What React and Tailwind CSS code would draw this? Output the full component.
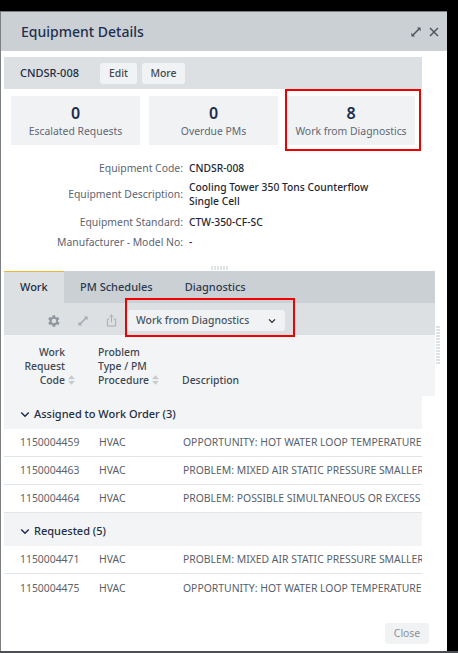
import React from "react";

const font = { fontFamily: '"Noto Sans", sans-serif' };

function Expand({ className }) {
  return (
    <svg viewBox="0 0 12 12" className={className} fill="currentColor">
      <path d="M7 0.500h4.500V5L9.900 3.400 3.400 9.900 5 11.500H0.500V7l1.600 1.600 6.500-6.500z" />
    </svg>
  );
}

function Chevron({ className }) {
  return (
    <svg viewBox="0 0 12 8" className={className} fill="none" stroke="currentColor" strokeWidth="1.800">
      <path d="M1.500 1.500 6 6l4.500-4.500" />
    </svg>
  );
}

function Sort() {
  return (
    <svg viewBox="0 0 8 11" className="w-[7px] h-[10px] text-[#c5cacf]" fill="currentColor">
      <path d="M4 0 8 4.500H0zM4 11 0 6.500h8z" />
    </svg>
  );
}

function Kpi({ n, label, width }) {
  return (
    <div className={`${width} h-[49px] bg-[#f1f2f4] flex flex-col items-center pt-[5px]`}>
      <div className="text-[16px] leading-[24px] font-semibold text-[#1d2c4c]">{n}</div>
      <div className="text-[10.4px] leading-[15px] text-[#5f6873] mt-[-1px]">{label}</div>
    </div>
  );
}

function Detail({ label, children, rowClass }) {
  return (
    <div className={`flex items-center ${rowClass}`}>
      <div className="w-[179px] text-right text-[10.4px] leading-[14px] text-[#5b6472] shrink-0">{label}</div>
      <div className="ml-[6px] text-[10.3px] leading-[14px] font-medium text-[#1e2733]">{children}</div>
    </div>
  );
}

function Row({ code, desc, last }) {
  return (
    <div className={`h-[28px] pt-[1px] flex items-center text-[10.4px] text-[#56606b] whitespace-nowrap overflow-hidden ${last ? "" : "border-b border-[#e2e5e8]"}`}>
      <div className="w-[95px] pl-[16px] shrink-0 text-[#5f6368]">{code}</div>
      <div className="w-[84px] shrink-0">HVAC</div>
      <div className="shrink-0">{desc}</div>
    </div>
  );
}

function Group({ label }) {
  return (
    <div className="h-[33px] pt-[3px] bg-[#f3f4f6] flex items-center pl-[16px] gap-[4px] text-[11px] font-medium text-[#232f42]">
      <Chevron className="w-[10px] h-[7px] text-[#1d2c4c]" />
      <span>{label}</span>
    </div>
  );
}

export default function App() {
  return (
    <div style={font} className="relative h-[653px] w-[458px] overflow-hidden bg-black pt-[11px]">
      <div className="w-[447px] h-[640px] bg-white border-l border-t border-[#7b7f83] flex flex-col">
        <header className="h-[39px] shrink-0 bg-[#cbd0d4] flex items-center pl-[20px] pr-[8px]">
          <h1 className="text-[14px] font-medium text-[#1f2f50] flex-1 leading-[20px]">Equipment Details</h1>
          <Expand className="w-[10px] h-[10px] text-[#4e5660] mr-[8px]" />
          <svg viewBox="0 0 10 10" className="w-[10px] h-[10px] text-[#4e5660]" fill="none" stroke="currentColor" strokeWidth="1.500">
            <path d="M1 1l8 8M9 1 1 9" />
          </svg>
        </header>

        <div className="pl-[3px] pt-[6px] flex-1 flex flex-col">
          <div className="w-[418px] h-[32px] bg-[#dce0e3] flex items-center pl-[16px]">
            <div className="w-[80px] text-[11px] font-medium text-[#1e2d45]">CNDSR-008</div>
            <button className="h-[21px] w-[37px] pt-[1px] rounded-[3px] bg-[#f1f2f3] text-[10.4px] text-[#3f4a57] font-medium">Edit</button>
            <button className="ml-[5px] h-[21px] w-[43px] pt-[1px] rounded-[3px] bg-[#f1f2f3] text-[10.4px] text-[#3f4a57] font-medium">More</button>
          </div>

          <div className="flex pl-[7px] gap-[9px] mt-[7px]">
            <Kpi n="0" label="Escalated Requests" width="w-[129px]" />
            <Kpi n="0" label="Overdue PMs" width="w-[129px]" />
            <Kpi n="8" label="Work from Diagnostics" width="w-[128px]" />
          </div>

          <div className="mt-[15px]">
            <Detail rowClass="h-[15px]" label="Equipment Code:">CNDSR-008</Detail>
            <Detail rowClass="h-[28px] mt-[5px]" label="Equipment Description:">
              Cooling Tower 350 Tons Counterflow
              <br />
              Single Cell
            </Detail>
            <Detail rowClass="h-[15px] mt-[6px]" label="Equipment Standard:">CTW-350-CF-SC</Detail>
            <Detail rowClass="h-[15px] mt-[5px]" label="Manufacturer - Model No:">-</Detail>
          </div>

          <div className="flex justify-center w-[431px] mt-[17px] h-[5px]">
            <div className="w-[18px] h-[4px] bg-[repeating-linear-gradient(to_right,#e0e2e5_0,#e0e2e5_2px,transparent_2px,transparent_3px)]" />
          </div>

          <div className="w-[431px] h-[32px] pt-[1px] bg-[#cbd0d4] flex text-[11px] text-[#2c3a4e] font-medium">
            <div className="w-[60px] mt-[-1px] bg-[#dce0e3] border-t border-[#f0b92b] flex items-center pl-[16px] text-[#1e2d45]">Work</div>
            <div className="ml-[16px] flex items-center">PM Schedules</div>
            <div className="ml-[32px] flex items-center">Diagnostics</div>
          </div>

          <div className="w-[431px] h-[32px] pt-[3px] bg-[#dce0e3] flex items-center pl-[43px]">
            <svg viewBox="3 2 21 20" className="w-[14px] h-[14px] text-[#8f969d]" fill="currentColor">
              <path d="M19.400 13a7.700 7.700 0 0 0 0-2l2.100-1.600-2-3.500-2.500 1a7.500 7.500 0 0 0-1.700-1L15.400 3.200h-4l-.4 2.700a7.500 7.500 0 0 0-1.700 1l-2.500-1-2 3.500L6.900 11a7.700 7.700 0 0 0 0 2l-2.100 1.600 2 3.500 2.500-1a7.500 7.500 0 0 0 1.700 1l.4 2.700h4l.4-2.700a7.500 7.500 0 0 0 1.700-1l2.500 1 2-3.500zM13.400 15.500a3.500 3.500 0 1 1 0-7 3.500 3.500 0 0 1 0 7z" />
            </svg>
            <Expand className="w-[10px] h-[10px] text-[#a3a9af] ml-[17px]" />
            <svg viewBox="0 0 12 14" className="w-[11px] h-[13px] ml-[18px] text-[#a3a9af]" fill="none" stroke="currentColor" strokeWidth="1">
              <path d="M3.500 5.500H1.500v7.500h9V5.500H8.500M6 9V1M3.700 3.200 6 1l2.300 2.200" />
            </svg>
            <div className="ml-[10px] w-[158px] h-[21px] rounded-[3px] bg-[#f1f2f3] flex items-center pl-[9px] pr-[9px] text-[10.4px] font-medium text-[#4b5563]">
              <span className="flex-1">Work from Diagnostics</span>
              <Chevron className="w-[8px] h-[6px] text-[#1f2937]" />
            </div>
          </div>

          <div className="w-[431px] h-[61px] bg-[#f3f4f6] flex items-end pb-[9px] text-[10.4px] leading-[14px] text-[#3d4754] font-medium">
            <div className="w-[61px] text-right shrink-0">
              Work
              <br />
              Request
              <br />
              Code
            </div>
            <div className="w-[10px] h-[14px] flex items-center justify-end shrink-0"><Sort /></div>
            <div className="ml-[23px] shrink-0">
              Problem
              <br />
              Type / PM
              <br />
              <span className="inline-flex items-center gap-[3px]">Procedure <Sort /></span>
            </div>
            <div className="ml-[23px] shrink-0">Description</div>
          </div>

          <div className="w-[418px] overflow-hidden">
            <Group label="Assigned to Work Order (3)" />
            <Row code="1150004459" desc="OPPORTUNITY: HOT WATER LOOP TEMPERATURE" />
            <Row code="1150004463" desc="PROBLEM: MIXED AIR STATIC PRESSURE SMALLER" />
            <Row code="1150004464" desc="PROBLEM: POSSIBLE SIMULTANEOUS OR EXCESS" />
            <Group label="Requested (5)" />
            <Row code="1150004471" desc="PROBLEM: MIXED AIR STATIC PRESSURE SMALLER" />
            <Row code="1150004475" desc="OPPORTUNITY: HOT WATER LOOP TEMPERATURE" last />
          </div>

          <div className="flex justify-end w-[425px] mt-[21px]">
            <button className="w-[44px] h-[21px] rounded-[3px] bg-[#f1f2f3] text-[10.4px] text-[#8a9097]">Close</button>
          </div>
        </div>
      </div>

      <div className="absolute left-0 right-0 top-[651px] h-[2px] bg-[#4a4f55]" />
      <div className="absolute left-[436px] top-[326px] w-[4px] h-[38px] bg-[repeating-linear-gradient(to_bottom,#dfe2e5_0,#dfe2e5_2px,transparent_2px,transparent_3px)]" />
      <div className="absolute left-[285px] top-[89px] w-[136px] h-[62px] border-2 border-[#f00000]" />
      <div className="absolute left-[125px] top-[298px] w-[170px] h-[39px] border-2 border-[#f00000]" />
    </div>
  );
}
